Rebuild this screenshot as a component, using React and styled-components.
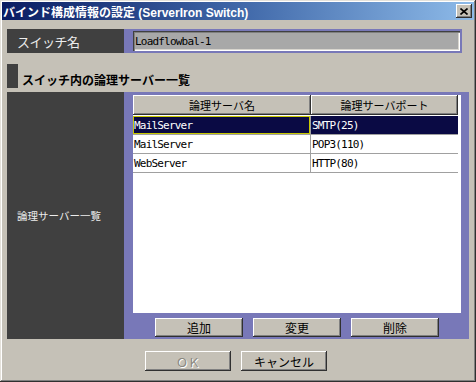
import React from "react";
import styled, { createGlobalStyle } from "styled-components";

const Global = createGlobalStyle`
  html, body { margin: 0; padding: 0; background: #c5c1b7; }
  body { width: 476px; height: 382px; overflow: hidden; }
`;

const GRAY = "#c5c1b7";
const DARK = "#404040";
const PURPLE = "#7878b8";
const JP = `"Noto Sans CJK JP", sans-serif`;
const MIX = `"Liberation Sans", "Noto Sans CJK JP", sans-serif`;
const MONO = `"DejaVu Sans Mono", "Noto Sans CJK JP", monospace`;

const raised = `
  box-shadow: inset -1px -1px #303030, inset 1px 1px #ffffff,
    inset -2px -2px #808080, inset 2px 2px ${GRAY};
`;

const Window = styled.div`
  box-sizing: border-box;
  width: 476px;
  height: 382px;
  padding: 2px;
  background: ${GRAY};
  box-shadow: inset -1px -1px #303030, inset 1px 1px #e4e1da,
    inset -2px -2px #808080, inset 2px 2px #ffffff;
  display: flex;
  flex-direction: column;
`;

const TitleBar = styled.div`
  height: 18px;
  display: flex;
  align-items: center;
  justify-content: space-between;
  padding: 0 2px 0 1px;
  background: linear-gradient(to right, #0a1c62, #3f67a8 50%, #8ebbe9);
`;

const TitleText = styled.span`
  color: #ffffff;
  font-family: ${MIX};
  font-weight: bold;
  font-size: 12px;
  white-space: nowrap;
`;

const CloseBtn = styled.div`
  width: 16px;
  height: 14px;
  background: ${GRAY};
  ${raised}
  display: flex;
  align-items: center;
  justify-content: center;
`;

const Body = styled.div`
  display: flex;
  flex-direction: column;
  padding: 9px 5px 0 5px;
`;

const FieldRow = styled.div`
  display: flex;
  height: 24px;
  margin-right: 7px;
`;

const Label = styled.div`
  width: 117px;
  flex: none;
  background: ${DARK};
  color: #ececec;
  font-family: ${JP};
  font-size: ${(p) => p.$size || 12}px;
  letter-spacing: ${(p) => p.$ls || 0}px;
  display: flex;
  align-items: center;
  padding-left: ${(p) => p.$pl || 10}px;
  box-sizing: border-box;
`;

const FieldArea = styled.div`
  flex: 1;
  background: ${PURPLE};
  padding: 2px 2px 2px 9px;
  display: flex;
`;

const TextBox = styled.div`
  flex: 1;
  height: 20px;
  background: #a8a8a8;
  box-shadow: inset 1px 1px #404040, inset 2px 2px #808080,
    inset -1px -1px #ffffff, inset -2px -2px #d8d5ce;
  font-family: ${MONO};
  font-size: 11px;
  letter-spacing: -0.8px;
  color: #000;
  display: flex;
  align-items: center;
  padding-left: 2px;
`;

const Section = styled.div`
  display: flex;
  align-items: center;
  height: 24px;
  margin-top: 11px;
  gap: 4px;
`;

const SectionMark = styled.div`
  width: 11px;
  height: 24px;
  background: ${DARK};
`;

const SectionTitle = styled.span`
  font-family: ${JP};
  font-weight: bold;
  font-size: 12px;
  color: #000;
  margin-top: 6px;
`;

const Main = styled.div`
  display: flex;
  height: 247px;
  margin-top: 4px;
`;

const MainArea = styled.div`
  flex: 1;
  background: ${PURPLE};
  padding: 3px 8px 2px 9px;
  display: flex;
  flex-direction: column;
`;

const TableBox = styled.div`
  height: 218px;
  background: #ffffff;
`;

const Row = styled.div`
  display: grid;
  grid-template-columns: 178px 147px;
  height: ${(p) => (p.$head ? 21 : 19)}px;
`;

const HeadCell = styled.div`
  height: 20px;
  background: ${GRAY};
  ${raised}
  font-family: ${JP};
  font-size: 11px;
  color: #000;
  display: flex;
  align-items: center;
  justify-content: center;
`;

const Cell = styled.div`
  box-sizing: border-box;
  border-bottom: 1px solid #a0a0a0;
  border-right: ${(p) => (p.$first ? "1px solid #a0a0a0" : "none")};
  background: ${(p) => (p.$sel ? "#0a0a44" : "#ffffff")};
  color: ${(p) => (p.$sel ? "#ffffff" : "#000000")};
  box-shadow: ${(p) => (p.$focus ? "inset 0 0 0 1px #c8c800" : "none")};
  font-family: ${MONO};
  font-size: 11px;
  letter-spacing: -0.8px;
  display: flex;
  align-items: center;
  padding-left: 1px;
  white-space: nowrap;
`;

const BtnRow = styled.div`
  display: flex;
  justify-content: center;
  gap: 10px;
  margin-top: 5px;
  width: 328px;
`;

const Button = styled.div`
  width: ${(p) => p.$w || 88}px;
  height: ${(p) => p.$h || 19}px;
  background: ${GRAY};
  ${raised}
  font-family: ${JP};
  font-size: 12px;
  color: ${(p) => (p.$disabled ? "#8a877f" : "#000")};
  text-shadow: ${(p) => (p.$disabled ? "1px 1px #ffffff" : "none")};
  display: flex;
  align-items: center;
  justify-content: center;
`;

const Footer = styled.div`
  display: flex;
  justify-content: center;
  gap: 10px;
  margin-top: 12px;
  padding-right: 4px;
`;

const rows = [
  { name: "MailServer", port: "SMTP(25)", sel: true },
  { name: "MailServer", port: "POP3(110)" },
  { name: "WebServer", port: "HTTP(80)" },
];

export default function App() {
  return (
    <>
      <Global />
      <Window>
        <TitleBar>
          <TitleText>バインド構成情報の設定 (ServerIron Switch)</TitleText>
          <CloseBtn>
            <svg width="8" height="7" viewBox="0 0 8 7">
              <path d="M0.5 0.5 L7.5 6.5 M7.5 0.5 L0.5 6.5" stroke="#000" strokeWidth="1.6" />
            </svg>
          </CloseBtn>
        </TitleBar>
        <Body>
          <FieldRow>
            <Label $size={13} $ls={-0.5}>スイッチ名</Label>
            <FieldArea>
              <TextBox>Loadflowbal-1</TextBox>
            </FieldArea>
          </FieldRow>
          <Section>
            <SectionMark />
            <SectionTitle>スイッチ内の論理サーバー一覧</SectionTitle>
          </Section>
          <Main>
            <Label $size={10.5}>論理サーバー一覧</Label>
            <MainArea>
              <TableBox>
                <Row $head>
                  <HeadCell>論理サーバ名</HeadCell>
                  <HeadCell>論理サーバポート</HeadCell>
                </Row>
                {rows.map((r, i) => (
                  <Row key={i}>
                    <Cell $first $sel={r.sel} $focus={r.sel}>{r.name}</Cell>
                    <Cell $sel={r.sel}>{r.port}</Cell>
                  </Row>
                ))}
              </TableBox>
              <BtnRow>
                <Button>追加</Button>
                <Button>変更</Button>
                <Button>削除</Button>
              </BtnRow>
            </MainArea>
          </Main>
          <Footer>
            <Button $w={86} $h={20} $disabled>ＯＫ</Button>
            <Button $w={86} $h={20}>キャンセル</Button>
          </Footer>
        </Body>
      </Window>
    </>
  );
}
